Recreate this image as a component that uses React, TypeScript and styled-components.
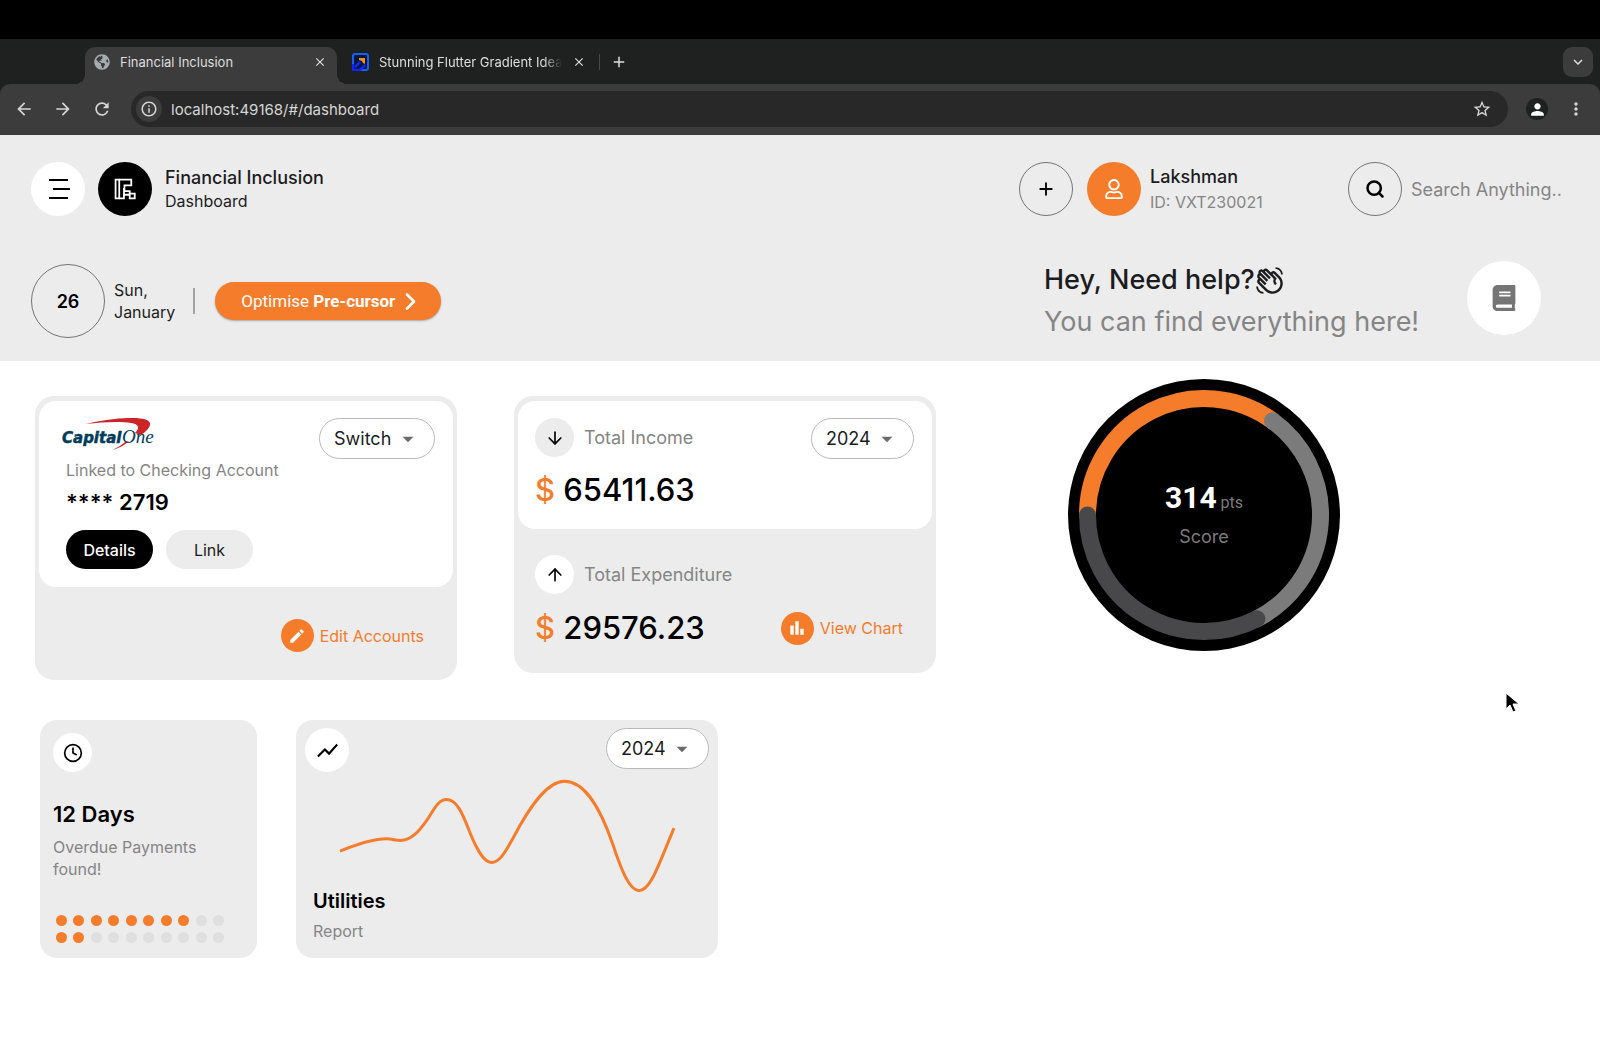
import React from "react";
import styled, { createGlobalStyle } from "styled-components";
import { ArrowDown, ArrowUp, Clock, Search } from "lucide-react";
import {
  MdAdd,
  MdArrowBack,
  MdArrowDropDown,
  MdArrowForward,
  MdBarChart,
  MdClose,
  MdEdit,
  MdInfoOutline,
  MdKeyboardArrowDown,
  MdMoreVert,
  MdOutlineWavingHand,
  MdPerson,
  MdRefresh,
  MdShowChart,
  MdStarBorder,
} from "react-icons/md";
import { FaBook, FaGlobeAmericas, FaRegUser } from "react-icons/fa";

const orange = "#f57c2b";
const panel = "#ececec";
const muted = "#858585";

const GlobalStyle = createGlobalStyle`
  * { box-sizing: border-box; }
  body {
    margin: 0;
    background: #fff;
    color: #1c1c1e;
    font-family: Inter, "Liberation Sans", sans-serif;
    font-size: 16px;
  }
  button, input, select { font: inherit; color: inherit; margin: 0; }
  button { border: 0; padding: 0; background: none; cursor: pointer; }
  h1, h2, p { margin: 0; }
  svg { display: block; flex: none; }
`;

/* ---------- Browser window ---------- */

const BrowserBar = styled.div`
  border-top: 39px solid #000;
  background: #1f2120;
`;

const TabStrip = styled.div`
  display: flex;
  height: 45px;
  padding: 8px 7px 0 85px;
  color: #dedede;
`;

const Tab = styled.div<{ $active?: boolean }>`
  position: relative;
  display: flex;
  align-items: center;
  gap: 10px;
  width: ${(p) => (p.$active ? 252 : 259)}px;
  height: 37px;
  padding: 0 10px 7px ${(p) => (p.$active ? 9 : 15)}px;
  border-radius: 10px 10px 0 0;
  background: ${(p) => (p.$active ? "#3c3c3c" : "transparent")};

  &::before,
  &::after {
    content: ${(p) => (p.$active ? '""' : "none")};
    position: absolute;
    bottom: 0;
    width: 10px;
    height: 10px;
  }

  &::before {
    right: 100%;
    background: radial-gradient(circle at 0 0, transparent 10px, #3c3c3c 10px);
  }

  &::after {
    left: 100%;
    background: radial-gradient(circle at 100% 0, transparent 10px, #3c3c3c 10px);
  }
`;

const TabTitle = styled.button<{ $fade?: boolean }>`
  flex: 1;
  min-width: 0;
  font-size: 13px;
  line-height: 20px;
  text-align: left;
  white-space: nowrap;
  ${(p) => p.$fade && "mask-image: linear-gradient(90deg, #000 90%, transparent);"}
`;

const NewTab = styled.button`
  display: flex;
  align-items: center;
  align-self: flex-start;
  gap: 10px;
  height: 30px;
  margin-left: 3px;

  &::before {
    content: "";
    width: 1px;
    height: 16px;
    background: #4a4a4a;
  }
`;

const TabSearch = styled.button`
  display: grid;
  place-items: center;
  width: 30px;
  height: 30px;
  margin-left: auto;
  border-radius: 9px;
  background: #3c3c3c;
`;

const Toolbar = styled.div`
  display: flex;
  align-items: center;
  height: 51px;
  padding: 0 14px 1px;
  border-radius: 10px 10px 0 0;
  background: #3c3c3c;
  color: #d6d6d6;
`;

const NavButtons = styled.div`
  display: flex;
  gap: 19px;
  margin-right: 19px;
`;

const AddressBar = styled.label`
  display: flex;
  flex: 1;
  align-items: center;
  gap: 9px;
  height: 36px;
  padding: 0 16px 0 5px;
  border-radius: 18px;
  background: #282828;
`;

const SiteInfo = styled.span`
  display: grid;
  place-items: center;
  width: 26px;
  height: 26px;
  border-radius: 50%;
  background: #3c3c3c;
`;

const AddressInput = styled.input`
  flex: 1;
  min-width: 0;
  padding: 0;
  border: 0;
  outline: 0;
  background: none;
  font-size: 15px;
`;

const Profile = styled.button`
  display: grid;
  place-items: center;
  width: 22px;
  height: 22px;
  margin: 0 18px;
  border-radius: 50%;
  background: #1f2120;
  color: #fff;
`;

/* ---------- Shared parts ---------- */

const Circle = styled.span<{ $size: number; $bg?: string; $fg?: string; $outlined?: boolean }>`
  display: grid;
  flex: none;
  place-items: center;
  width: ${(p) => p.$size}px;
  height: ${(p) => p.$size}px;
  border: ${(p) => (p.$outlined ? "1px solid #757575" : "0")};
  border-radius: 50%;
  background: ${(p) => p.$bg || "transparent"};
  color: ${(p) => p.$fg || "#000"};
`;

const Muted = styled.p`
  color: ${muted};
  font-size: 16px;
  line-height: 22px;
`;

const Row = styled.div<{ $top?: boolean }>`
  display: flex;
  align-items: ${(p) => (p.$top ? "flex-start" : "center")};
  justify-content: space-between;
`;

const Picker = styled.label`
  display: grid;
  align-items: center;
  flex: none;
`;

const PickerSelect = styled.select`
  grid-area: 1 / 1;
  height: 41px;
  padding: 0 42px 0 14px;
  border: 1px solid #b9b9b9;
  border-radius: 21px;
  background: #fff;
  font-size: 18px;
  appearance: none;
`;

const PickerArrow = styled(MdArrowDropDown)`
  grid-area: 1 / 1;
  justify-self: end;
  margin-right: 14px;
  color: #6b6b6b;
  pointer-events: none;
`;

function Dropdown({ label, value }: { label: string; value: string }) {
  return (
    <Picker>
      <PickerSelect aria-label={label} defaultValue={value}>
        <option>{value}</option>
      </PickerSelect>
      <PickerArrow size={26} />
    </Picker>
  );
}

/* ---------- Header ---------- */

const Header = styled.header`
  display: flex;
  flex-direction: column;
  gap: 43px;
  padding: 27px 31px 18px;
  background: ${panel};
`;

const Group = styled.div<{ $gap: number }>`
  display: flex;
  align-items: center;
  gap: ${(p) => p.$gap}px;
`;

const Title = styled.h1`
  font-size: 18px;
  font-weight: 500;
  line-height: 24px;
`;

const Subtitle = styled.p`
  font-size: 16px;
  line-height: 22px;
`;

const UserText = styled.div`
  width: 189px;

  ${Muted} {
    margin-top: 2px;
  }
`;

const SearchBox = styled.label`
  display: flex;
  align-items: center;
  gap: 9px;
`;

const SearchInput = styled.input`
  width: 158px;
  padding: 0;
  border: 0;
  outline: 0;
  background: none;
  font-size: 18px;

  &::placeholder {
    color: ${muted};
    opacity: 1;
  }
`;

const Day = styled.span`
  font-size: 18px;
  font-weight: 600;
`;

const Divider = styled.span`
  width: 2px;
  height: 26px;
  margin: 0 11px 0 9px;
  background: #a3a3a3;
`;

const Optimise = styled.button`
  display: flex;
  align-items: center;
  justify-content: space-between;
  width: 226px;
  height: 38px;
  padding: 0 25px 0 26px;
  border-radius: 19px;
  background: ${orange};
  box-shadow: 0 1px 2px rgba(0, 0, 0, 0.3);
  color: #fff;
  font-family: Roboto, sans-serif;
  font-size: 17px;
`;

const Help = styled.div`
  display: flex;
  align-items: flex-start;
  justify-content: space-between;
  width: 497px;
  margin-right: 28px;
`;

const HelpTitle = styled.h2`
  display: flex;
  align-items: center;
  font-size: 27px;
  font-weight: 500;
  line-height: 42px;
`;

const Wave = styled(MdOutlineWavingHand)`
  transform: scaleX(-1);
`;

const HelpText = styled.p`
  color: ${muted};
  font-size: 27px;
  line-height: 42px;
`;

const BookButton = styled.button`
  display: grid;
  place-items: center;
  width: 74px;
  height: 74px;
  margin-top: 2px;
  border-radius: 50%;
  background: #fff;
  color: #757575;
`;

/* ---------- Dashboard ---------- */

const Main = styled.main`
  padding: 18px 35px 40px;
`;

const TopCards = styled.div`
  display: grid;
  grid-template-columns: 422fr 422fr 572fr;
  align-items: start;
  gap: 57px;
`;

const LowerCards = styled.div`
  display: grid;
  grid-template-columns: 217fr 422fr 808fr;
  gap: 39px;
  margin-top: 40px;
  padding-left: 5px;
`;

const Card = styled.section`
  margin-top: 17px;
  padding: 5px 4px 0;
  border-radius: 19px;
  background: ${panel};
`;

const CardInset = styled.div`
  border-radius: 17px;
  background: #fff;
`;

const AccountInset = styled(CardInset)`
  padding: 17px 18px 18px 23px;
`;

const AccountBody = styled.div`
  padding-left: 4px;
`;

const AccountNumber = styled.p`
  margin: 7px 0 14px;
  color: #000;
  font-size: 22px;
  font-weight: 600;
  line-height: 28px;
`;

const Pill = styled.button<{ $dark?: boolean }>`
  width: 87px;
  height: 39px;
  border-radius: 20px;
  background: ${(p) => (p.$dark ? "#000" : panel)};
  color: ${(p) => (p.$dark ? "#fff" : "#1c1c1e")};
  font-weight: ${(p) => (p.$dark ? 500 : 400)};
`;

const CardLink = styled.a`
  display: flex;
  align-items: center;
  gap: 6px;
  color: ${orange};
  font-size: 16px;
  text-decoration: none;
`;

const AccountFoot = styled.div`
  display: flex;
  justify-content: flex-end;
  padding: 32px 29px 28px;
`;

const IncomeInset = styled(CardInset)`
  padding: 17px 18px 19px 17px;
`;

const Expenditure = styled.div`
  padding: 26px 29px 25px 17px;
`;

const Label = styled.span`
  color: ${muted};
  font-size: 18px;
`;

const Amount = styled.p`
  color: #000;
  font-size: 31px;
  font-weight: 500;
  line-height: 40px;

  span {
    color: ${orange};
  }
`;

const AmountRow = styled(Row)<{ $gap: number }>`
  margin-top: ${(p) => p.$gap}px;
`;

const Gauge = styled.div`
  display: grid;
  place-items: center;
  width: 272px;
  margin-left: 75px;

  > * {
    grid-area: 1 / 1;
  }
`;

const GaugeText = styled.div`
  padding-bottom: 4px;
  color: #7b7b7b;
  font-size: 18px;
  line-height: 26px;
  text-align: center;
`;

const Score = styled.p`
  font-family: Roboto, sans-serif;
  font-size: 16px;
  line-height: 42px;

  strong {
    color: #fff;
    font-size: 30px;
    font-weight: 700;
  }
`;

const OverdueCard = styled.section`
  padding: 13px;
  border-radius: 17px;
  background: ${panel};
`;

const CardTitle = styled.h2<{ $size: number }>`
  color: #000;
  font-size: ${(p) => p.$size}px;
  font-weight: 600;
  line-height: 30px;
`;

const OverdueText = styled.div`
  margin: 27px 0 35px;

  ${Muted} {
    margin-top: 7px;
  }
`;

const Dots = styled.div`
  display: grid;
  grid-template-columns: repeat(10, 11px);
  justify-content: space-between;
  row-gap: 6px;
  margin: 0 20px 0 3px;
`;

const Dot = styled.span<{ $on: boolean }>`
  height: 11px;
  border-radius: 50%;
  background: ${(p) => (p.$on ? orange : "#dfdfdf")};
`;

const UtilitiesCard = styled.section`
  padding: 8px 9px 16px;
  border-radius: 17px;
  background: ${panel};
`;

const Curve = styled.svg`
  width: calc(100% - 60px);
  margin: 5px 0 -11px 30px;
`;

const UtilitiesText = styled.div`
  padding-left: 8px;

  ${Muted} {
    margin-top: 4px;
  }
`;

const Cursor = styled.svg`
  position: absolute;
  top: 692px;
  right: 81px;
`;

function MenuMark() {
  return (
    <svg width="24" height="22" viewBox="0 0 24 22" fill="none" stroke="#000" strokeWidth="2">
      <path d="M3 2h19M7 11h18M3 20h19" />
    </svg>
  );
}

function BrandMark() {
  return (
    <svg width="22" height="22" viewBox="0 0 21 20" fill="none" stroke="#fff" strokeWidth="1.700">
      <path d="M1.500 1H5v18H1.500z" />
      <path d="M5 1h11.500v5.500H10V12h5v2.500" />
      <path d="M5 19h4.500V9M9.500 15.500H15" />
      <path d="M15 14.500h4.800V19H15z" />
    </svg>
  );
}

function ChevronMark() {
  return (
    <svg width="11" height="17" viewBox="0 0 11 17" fill="none" stroke="#fff" strokeWidth="2.600">
      <path d="M2 1.500l7 7-7 7" strokeLinecap="round" strokeLinejoin="round" />
    </svg>
  );
}

function GradientFavicon() {
  return (
    <svg width="17" height="18" viewBox="0 0 17 18">
      <rect x="1" y="1" width="15" height="16" rx="2" fill="#07163a" stroke="#1263f1" strokeWidth="2" />
      <path d="M1 11v6h7l5-5M3 14l5-5" fill="none" stroke="#1226f5" strokeWidth="2.500" />
      <path d="M7 5h6v6l-2-1-1-2-3-1z" fill="#ff8b25" />
    </svg>
  );
}

function CapitalOneLogo() {
  return (
    <svg width="94" height="33" viewBox="0 0 94 33" role="img" aria-label="Capital One">
      <path d="M24 6C44 1 60 0 70 0c12 0 18 2 18 6 0 3-3 7-9 11l-6-2c5-5 4-9-4-10C58 3 40 4 24 6z" fill="#cc2427" />
      <path d="M63 24c-2 2-6 5-13 8 8-2 13-5 17-9z" fill="#cc2427" />
      <text x="0" y="25" fill="#013d5b" stroke="#013d5b" strokeWidth="0.500" fontFamily="DejaVu Sans, sans-serif" fontSize="15" fontStyle="italic" fontWeight="700">
        Capital
      </text>
      <text x="60" y="25" fill="#013d5b" fontFamily="Liberation Serif, serif" fontSize="19" fontStyle="italic">
        One
      </text>
    </svg>
  );
}

const ring = (from: number, to: number) => {
  const at = (deg: number) => {
    const a = (deg * Math.PI) / 180;
    return `${136 + 116.5 * Math.sin(a)} ${136 - 116.5 * Math.cos(a)}`;
  };
  return `M${at(from)}A116.5 116.5 0 ${to - from > 180 ? 1 : 0} 1 ${at(to)}`;
};

export default function App() {
  return (
    <>
      <GlobalStyle />
      <BrowserBar>
        <TabStrip>
          <Tab $active>
            <FaGlobeAmericas size={16} color="#a5abb0" />
            <TabTitle>Financial Inclusion</TabTitle>
            <button aria-label="Close first tab">
              <MdClose size={14} />
            </button>
          </Tab>
          <Tab>
            <GradientFavicon />
            <TabTitle $fade>Stunning Flutter Gradient Idea</TabTitle>
            <button aria-label="Close second tab">
              <MdClose size={14} />
            </button>
          </Tab>
          <NewTab aria-label="New tab">
            <MdAdd size={18} />
          </NewTab>
          <TabSearch aria-label="Search tabs">
            <MdKeyboardArrowDown size={18} />
          </TabSearch>
        </TabStrip>
        <Toolbar>
          <NavButtons>
            <button aria-label="Back"><MdArrowBack size={20} /></button>
            <button aria-label="Forward"><MdArrowForward size={20} /></button>
            <button aria-label="Reload"><MdRefresh size={20} /></button>
          </NavButtons>
          <AddressBar>
            <SiteInfo><MdInfoOutline size={18} /></SiteInfo>
            <AddressInput aria-label="Address" defaultValue="localhost:49168/#/dashboard" />
            <MdStarBorder size={20} />
          </AddressBar>
          <Profile aria-label="Profile"><MdPerson size={19} /></Profile>
          <button aria-label="Browser menu"><MdMoreVert size={20} /></button>
        </Toolbar>
      </BrowserBar>

      <Header>
        <Row>
          <Group $gap={13}>
            <Circle as="button" aria-label="Menu" $size={54} $bg="#fff"><MenuMark /></Circle>
            <Circle $size={54} $bg="#000"><BrandMark /></Circle>
            <div>
              <Title>Financial Inclusion</Title>
              <Subtitle>Dashboard</Subtitle>
            </div>
          </Group>
          <Group $gap={9}>
            <Group $gap={14}>
              <Circle as="button" aria-label="Add" $size={54} $outlined><MdAdd size={22} /></Circle>
              <Circle $size={54} $bg={orange} $fg="#fff"><FaRegUser size={20} /></Circle>
            </Group>
            <UserText>
              <Title as="p">Lakshman</Title>
              <Muted>ID: VXT230021</Muted>
            </UserText>
            <SearchBox>
              <Circle $size={54} $outlined><Search size={20} strokeWidth={3} /></Circle>
              <SearchInput type="text" aria-label="Search" placeholder="Search Anything.." />
            </SearchBox>
          </Group>
        </Row>
        <Row>
          <Group $gap={9}>
            <Circle $size={74} $outlined><Day>26</Day></Circle>
            <Subtitle>Sun,<br />January</Subtitle>
            <Divider />
            <Optimise>
              <span>Optimise <b>Pre-cursor</b></span>
              <ChevronMark />
            </Optimise>
          </Group>
          <Help>
            <div>
              <HelpTitle>Hey, Need help?<Wave size={29} /></HelpTitle>
              <HelpText>You can find everything here!</HelpText>
            </div>
            <BookButton aria-label="Help guide"><FaBook size={26} /></BookButton>
          </Help>
        </Row>
      </Header>

      <Main>
        <TopCards>
          <Card>
            <AccountInset>
              <Row $top>
                <CapitalOneLogo />
                <Dropdown label="Account" value="Switch" />
              </Row>
              <AccountBody>
                <Muted>Linked to Checking Account</Muted>
                <AccountNumber>**** 2719</AccountNumber>
                <Group $gap={13}>
                  <Pill $dark>Details</Pill>
                  <Pill>Link</Pill>
                </Group>
              </AccountBody>
            </AccountInset>
            <AccountFoot>
              <CardLink href="#accounts">
                <Circle $size={33} $bg={orange} $fg="#fff"><MdEdit size={18} /></Circle>
                Edit Accounts
              </CardLink>
            </AccountFoot>
          </Card>

          <Card>
            <IncomeInset>
              <Row $top>
                <Group $gap={10}>
                  <Circle $size={39} $bg={panel}><ArrowDown size={20} /></Circle>
                  <Label>Total Income</Label>
                </Group>
                <Dropdown label="Income year" value="2024" />
              </Row>
              <AmountRow $gap={11}>
                <Amount><span>$</span> 65411.63</Amount>
              </AmountRow>
            </IncomeInset>
            <Expenditure>
              <Group $gap={10}>
                <Circle $size={39} $bg="#fff"><ArrowUp size={20} /></Circle>
                <Label>Total Expenditure</Label>
              </Group>
              <AmountRow $gap={14}>
                <Amount><span>$</span> 29576.23</Amount>
                <CardLink href="#chart">
                  <Circle $size={33} $bg={orange} $fg="#fff"><MdBarChart size={20} /></Circle>
                  View Chart
                </CardLink>
              </AmountRow>
            </Expenditure>
          </Card>

          <Gauge>
            <svg width="272" height="272" viewBox="0 0 272 272" fill="none" strokeWidth="17">
              <circle cx="136" cy="136" r="136" fill="#000" />
              <path d={ring(-91, 37)} stroke={orange} />
              <path d={ring(36, 153)} stroke="#7b7b7b" strokeLinecap="round" />
              <path d={ring(153, 270)} stroke="#48484a" strokeLinecap="round" />
            </svg>
            <GaugeText>
              <Score><strong>314</strong> pts</Score>
              <p>Score</p>
            </GaugeText>
          </Gauge>
        </TopCards>

        <LowerCards>
          <OverdueCard>
            <Circle $size={39} $bg="#fff"><Clock size={20} /></Circle>
            <OverdueText>
              <CardTitle $size={22}>12 Days</CardTitle>
              <Muted>Overdue Payments<br />found!</Muted>
            </OverdueText>
            <Dots>
              {Array.from({ length: 20 }, (_, i) => (
                <Dot key={i} $on={i < 8 || i === 10 || i === 11} />
              ))}
            </Dots>
          </OverdueCard>
          <UtilitiesCard>
            <Row $top>
              <Circle $size={44} $bg="#fff"><MdShowChart size={25} /></Circle>
              <Dropdown label="Utilities year" value="2024" />
            </Row>
            <Curve viewBox="165 230 1035 360" fill="none" stroke={orange} strokeWidth="9">
              <path d="M180 453C230 433 280 416 320 416C340 416 345 421 362 421C395 421 420 390 440 362C462 330 475 298 500 298C535 298 552 350 572 400C592 448 612 487 636 487C662 487 680 450 700 415C745 330 800 243 855 243C920 243 965 330 1000 430C1025 505 1050 572 1080 572C1115 572 1140 490 1185 384" />
            </Curve>
            <UtilitiesText>
              <CardTitle $size={20}>Utilities</CardTitle>
              <Muted>Report</Muted>
            </UtilitiesText>
          </UtilitiesCard>
        </LowerCards>
      </Main>

      <Cursor width="14" height="22" viewBox="0 0 14 22" fill="#000" stroke="#fff" aria-hidden="true">
        <path d="M1 1v16l4-4 3 7 3-1-3-7h6z" />
      </Cursor>
    </>
  );
}
